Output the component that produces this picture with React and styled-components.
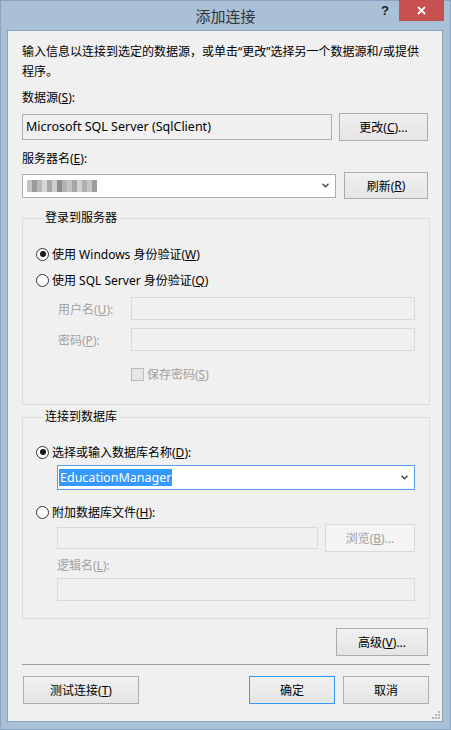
import React from "react";
import styled, { createGlobalStyle } from "styled-components";

const GlobalStyle = createGlobalStyle`
  html, body {
    margin: 0;
    padding: 0;
  }
  body {
    font-family: "Noto Sans", "Noto Sans CJK SC", sans-serif;
    font-size: 12px;
    color: #000;
  }
`;

const Window = styled.div`
  width: 451px;
  height: 730px;
  box-sizing: border-box;
  background: #aac0d7;
  border: 1px solid #8ba3bd;
  display: flex;
  flex-direction: column;
`;

const TitleBar = styled.div`
  height: 29px;
  display: grid;
  grid-template-columns: 1fr auto 1fr;
  align-items: start;
`;

const Title = styled.div`
  grid-column: 2;
  font-size: 15px;
  line-height: 29px;
  color: #333;
  font-family: "Noto Sans CJK SC", sans-serif;
`;

const Controls = styled.div`
  grid-column: 3;
  display: flex;
  justify-content: flex-end;
  align-items: flex-start;
  margin-top: -1px;
  padding-right: 6px;
`;

const HelpGlyph = styled.span`
  font-family: "Liberation Sans", sans-serif;
  font-weight: bold;
  font-size: 13px;
  line-height: 22px;
  color: #222;
  margin-right: 10px;
`;

const CloseButton = styled.div`
  width: 45px;
  height: 21px;
  background: #c75050;
  display: flex;
  align-items: center;
  justify-content: center;
`;

const Content = styled.div`
  flex: 1;
  margin: 0 7px 7px 6px;
  background: #f0f0f0;
  border: 1px solid #8fa4ba;
  padding: 11px 12px 0 14px;
  display: flex;
  flex-direction: column;
  position: relative;
`;

const Intro = styled.p`
  margin: 0;
  line-height: 20px;
  padding-right: 6px;
`;

const Label = styled.div`
  line-height: 20px;
  margin-top: ${(p) => p.$top || 0}px;
  padding-left: ${(p) => p.$indent || 0}px;
  color: ${(p) => (p.$disabled ? "#a0a0a0" : "#000")};
`;

const Row = styled.div`
  display: flex;
  align-items: center;
  height: ${(p) => p.$h}px;
  margin-top: ${(p) => p.$top || 0}px;
  padding-left: ${(p) => p.$indent || 0}px;
  gap: ${(p) => p.$gap || 0}px;
`;

const TextBox = styled.div`
  box-sizing: border-box;
  width: ${(p) => p.$w}px;
  height: ${(p) => p.$h}px;
  border: 1px solid ${(p) => (p.$disabled ? "#d9d9d9" : "#abadb3")};
  background: ${(p) => (p.$white ? "#fff" : "#f0f0f0")};
  display: flex;
  align-items: center;
  padding: 0 3px;
  line-height: 16px;
  font-size: ${(p) => p.$fs || 12}px;
`;

const Combo = styled(TextBox)`
  background: #fff;
  border-color: ${(p) => (p.$focus ? "#569de5" : "#abadb3")};
  padding: 0 6px 0 1px;
  justify-content: space-between;
`;

const Button = styled.div`
  box-sizing: border-box;
  width: ${(p) => p.$w}px;
  height: ${(p) => p.$h || 28}px;
  border: 1px solid ${(p) => (p.$default ? "#3399ff" : p.$disabled ? "#d9d9d9" : "#acacac")};
  background: ${(p) =>
    p.$disabled ? "#f4f4f4" : "linear-gradient(#f0f0f0, #e5e5e5)"};
  color: ${(p) => (p.$disabled ? "#a0a0a0" : "#000")};
  display: flex;
  align-items: center;
  justify-content: center;
  flex-shrink: 0;
`;

const Blur = styled.div`
  display: flex;
  height: 12px;
  margin-left: 3px;
`;

const BlurCell = styled.span`
  width: 5px;
  height: 12px;
  background: ${(p) => p.$c};
`;

const Selected = styled.span`
  background: #3399ff;
  color: #fff;
  line-height: 17px;
  padding: 0 1px;
`;

const Group = styled.fieldset`
  margin: ${(p) => p.$top}px 0 0 0;
  padding: 0 14px ${(p) => p.$bottom}px 13px;
  border: 1px solid #dcdcdc;
  min-width: 0;
`;

const Legend = styled.legend`
  padding: 0 2px;
  margin-left: 7px;
  line-height: 20px;
`;

const RadioRow = styled.label`
  display: flex;
  align-items: center;
  height: 20px;
  margin-top: ${(p) => p.$top}px;
`;

const RadioCircle = styled.span`
  box-sizing: border-box;
  width: 13px;
  height: 13px;
  border-radius: 50%;
  border: 1px solid #333;
  background: #fff;
  margin-right: 3px;
  display: flex;
  align-items: center;
  justify-content: center;
  &::after {
    content: "";
    width: 6px;
    height: 6px;
    border-radius: 50%;
    background: ${(p) => (p.$checked ? "#1a1a1a" : "transparent")};
  }
`;

const FieldLabel = styled.span`
  width: 73px;
  padding-left: 22px;
  color: #a0a0a0;
  flex-shrink: 0;
`;

const CheckRow = styled.div`
  display: flex;
  align-items: center;
  height: 20px;
  margin-top: 13px;
  padding-left: 95px;
  color: #a0a0a0;
`;

const CheckBox = styled.span`
  box-sizing: border-box;
  width: 13px;
  height: 13px;
  border: 1px solid #bcbcbc;
  background: #e6e6e6;
  margin-right: 3px;
`;

const AdvancedRow = styled.div`
  display: flex;
  justify-content: flex-end;
  margin-top: 9px;
  padding-right: 2px;
`;

const Separator = styled.div`
  height: 1px;
  background: #a0a0a0;
  margin-top: 8px;
`;

const Footer = styled.div`
  display: flex;
  margin-top: 11px;
  padding: 0 1px;
  gap: 8px;
`;

const Spacer = styled.div`
  flex: 1;
`;

const Grip = styled.svg`
  position: absolute;
  right: 2px;
  bottom: 2px;
`;

const Chevron = () => (
  <svg width="7" height="5" viewBox="0 0 7 5">
    <polyline points="0.5,0.8 3.5,3.8 6.5,0.8" fill="none" stroke="#444" strokeWidth="1.4" />
  </svg>
);

const blurColors = [
  "#c4c4c4", "#9a9a9a", "#b8b8b8", "#d6d6d6", "#a8a8a8", "#cfcfcf", "#8e8e8e",
  "#b3b3b3", "#c8c0c4", "#a6a6a6", "#d2d2d2", "#b0b0b0", "#c6c6c6", "#9e9e9e",
];

export default function App() {
  return (
    <>
      <GlobalStyle />
      <Window>
        <TitleBar>
          <Title>添加连接</Title>
          <Controls>
            <HelpGlyph>?</HelpGlyph>
            <CloseButton>
              <svg width="9" height="9" viewBox="0 0 9 9">
                <path d="M1 1 L8 8 M8 1 L1 8" stroke="#fff" strokeWidth="1.8" />
              </svg>
            </CloseButton>
          </Controls>
        </TitleBar>
        <Content>
          <Intro>
            输入信息以连接到选定的数据源，或单击“更改”选择另一个数据源和/或提供程序。
          </Intro>
          <Label $top={6}>
            数据源(<u>S</u>):
          </Label>
          <Row $h={28} $top={5} $gap={7}>
            <TextBox $w={310} $h={26} $fs={12.5}>Microsoft SQL Server (SqlClient)</TextBox>
            <Button $w={89}>
              更改(<u>C</u>)...
            </Button>
          </Row>
          <Label $top={8}>
            服务器名(<u>E</u>):
          </Label>
          <Row $h={27} $top={3} $gap={8}>
            <Combo $w={314} $h={24}>
              <Blur>
                {blurColors.map((c, i) => (
                  <BlurCell key={i} $c={c} />
                ))}
              </Blur>
              <Chevron />
            </Combo>
            <Button $w={84} $h={27}>
              刷新(<u>R</u>)
            </Button>
          </Row>

          <Group $top={9} $bottom={20}>
            <Legend>登录到服务器</Legend>
            <RadioRow $top={16}>
              <RadioCircle $checked />
              使用 Windows 身份验证(<u>W</u>)
            </RadioRow>
            <RadioRow $top={6}>
              <RadioCircle />
              使用 SQL Server 身份验证(<u>Q</u>)
            </RadioRow>
            <Row $h={23} $top={7}>
              <FieldLabel>
                用户名(<u>U</u>):
              </FieldLabel>
              <TextBox $w={285} $h={23} $disabled />
            </Row>
            <Row $h={23} $top={8}>
              <FieldLabel>
                密码(<u>P</u>):
              </FieldLabel>
              <TextBox $w={285} $h={23} $disabled />
            </Row>
            <CheckRow>
              <CheckBox />
              保存密码(<u>S</u>)
            </CheckRow>
          </Group>

          <Group $top={2} $bottom={17}>
            <Legend>连接到数据库</Legend>
            <RadioRow $top={15}>
              <RadioCircle $checked />
              选择或输入数据库名称(<u>D</u>):
            </RadioRow>
            <Row $h={25} $top={3} $indent={21}>
              <Combo $w={359} $h={25} $focus $fs={12.5}>
                <Selected>EducationManager</Selected>
                <Chevron />
              </Combo>
            </Row>
            <RadioRow $top={12}>
              <RadioCircle />
              附加数据库文件(<u>H</u>):
            </RadioRow>
            <Row $h={28} $top={2} $indent={21} $gap={7}>
              <TextBox $w={261} $h={22} $disabled />
              <Button $w={90} $disabled>
                浏览(<u>B</u>)...
              </Button>
            </Row>
            <Label $top={4} $indent={21} $disabled>
              逻辑名(<u>L</u>):
            </Label>
            <Row $h={23} $top={2} $indent={21}>
              <TextBox $w={359} $h={23} $disabled />
            </Row>
          </Group>

          <AdvancedRow>
            <Button $w={92}>
              高级(<u>V</u>)...
            </Button>
          </AdvancedRow>
          <Separator />
          <Footer>
            <Button $w={116}>
              测试连接(<u>T</u>)
            </Button>
            <Spacer />
            <Button $w={86} $default>
              确定
            </Button>
            <Button $w={86}>取消</Button>
          </Footer>

          <Grip width="8" height="8" viewBox="0 0 8 8">
            <rect x="6" y="0" width="2" height="2" fill="#b5b5b5" />
            <rect x="3" y="3" width="2" height="2" fill="#b5b5b5" />
            <rect x="6" y="3" width="2" height="2" fill="#b5b5b5" />
            <rect x="0" y="6" width="2" height="2" fill="#b5b5b5" />
            <rect x="3" y="6" width="2" height="2" fill="#b5b5b5" />
            <rect x="6" y="6" width="2" height="2" fill="#b5b5b5" />
          </Grip>
        </Content>
      </Window>
    </>
  );
}
